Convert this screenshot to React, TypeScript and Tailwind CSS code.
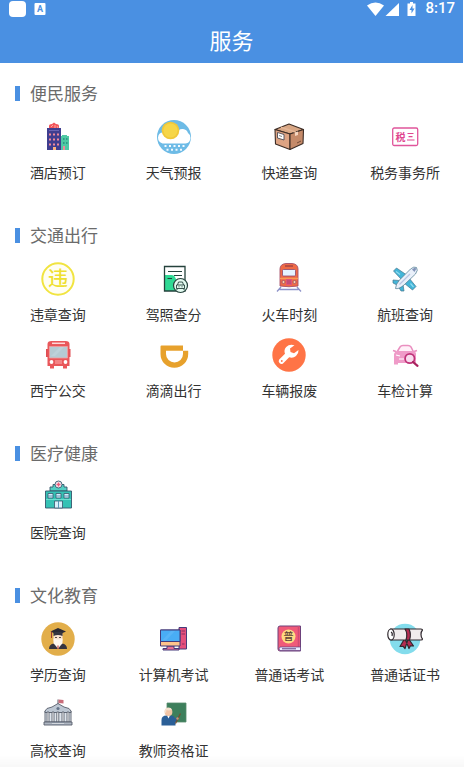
import type { ReactNode } from 'react'

type Service = { name: string; icon: ReactNode }
type Group = { title: string; items: Service[] }

function Icon({ children }: { children: ReactNode }) {
  return (
    <svg viewBox="0 0 34 34" className="size-[34px] overflow-visible" aria-hidden="true">
      {children}
    </svg>
  )
}

const HotelIcon = () => (
  <Icon>
    <path d="M8 9V6q0-2 3-2l2-1.500 2 1.500q3 0 3 2v3z" fill="#f2545b" />
    <path d="M10 7l2-2M14 5v3M16 6l1 2" stroke="#ffc0b0" strokeWidth="0.800" />
    <path d="M19.500 17v-1h1.500v-1h5v1h2v14h-8.500z" fill="#4fc9a4" />
    <path d="M6 8h14v22H6z" fill="#3f3d8f" />
    <g fill="#f08a9b">
      <path d="M8 13.500h2v2H8zM12 13.500h2v2h-2zM16 13.500h2v2h-2zM8 18.500h2v2H8zM12 18.500h2v2h-2zM16 18.500h2v2h-2zM8 23.500h2v2H8zM12 23.500h2v2h-2zM16 23.500h2v2h-2z" />
    </g>
    <path d="M8 10.500h10" stroke="#6864b4" />
    <path d="M22 18h1.500v2H22zM25 18h1.500v2H25zM22 22h1.500v2H22zM25 22h1.500v2H25z" fill="#2f9a86" />
    <path d="M12 27h3v3h-3z" fill="#ffb37c" />
    <path d="M22 26h2v4h-2z" fill="#f08a9b" />
  </Icon>
)

const WeatherIcon = () => (
  <Icon>
    <circle cx="17" cy="17" r="17" fill="#6dbbe6" />
    <path d="M5.500 23.500Q1 22 1 17.500 1.500 12.500 6 12.500q8 5 13 1Q21.500 8.500 26 9q4 .5 5 4 2.500 1.500 2.500 5-.5 5-5 5.500z" fill="#fff" />
    <circle cx="13.500" cy="10.500" r="8.800" fill="#f0c83a" />
    <circle cx="13.500" cy="10.500" r="7" fill="#f6d648" />
    <g fill="#f2faff">
      <path d="M7.500 25h2v2h-2zM12 25h2v2h-2zM16.500 25h2v2h-2zM21 25h2v2h-2zM25.500 25h2v2h-2zM9.500 28.800h2v2h-2zM14 28.800h2v2h-2zM18.500 28.800h2v2h-2zM23 28.800h2v2h-2z" />
    </g>
  </Icon>
)

const ParcelIcon = () => (
  <Icon>
    <g stroke="#3c2c25" strokeWidth="1.100" strokeLinejoin="round">
      <path d="M3 9.500L17 4l14.500 5.500L18 14z" fill="#d9a785" />
      <path d="M3 9.500L18 14v15.500L3.500 24z" fill="#dda383" />
      <path d="M18 14l13.500-4.500L31 23.500l-13 6z" fill="#c58a69" />
    </g>
    <path d="M9 7.200l15 5" stroke="#e5b797" strokeWidth="1.500" />
    <path d="M23 12.500l3-1v3.500l-3 1z" fill="#f6d6c0" />
    <path d="M5.500 12.500l6.500 2v5.500l-6.500-2z" fill="#fff" stroke="#4b4b55" strokeWidth="0.900" />
    <path d="M7 15.500l3 1" stroke="#888" />
    <path d="M25 23l4-2" stroke="#5c3a2a" strokeWidth="0.800" />
  </Icon>
)

const TaxIcon = () => (
  <Icon>
    <rect x="4.700" y="8" width="25" height="17.500" rx="1.500" fill="#fff" stroke="#e0559b" strokeWidth="1.300" />
    <text x="7.500" y="20.500" fontSize="10" fontWeight="700" fill="#e0468f" fontFamily="'Noto Sans CJK SC', sans-serif">
      税
    </text>
    <path d="M19.500 13.500h6M20.500 16.700h4M19 20h7.500" stroke="#e0468f" strokeWidth="1.200" />
  </Icon>
)

const ViolationIcon = () => (
  <Icon>
    <circle cx="17" cy="17" r="15.700" fill="#fffef2" stroke="#f1e440" strokeWidth="2" />
    <text x="17" y="24" fontSize="20" textAnchor="middle" fill="#efe02f" fontWeight="500" fontFamily="'Noto Sans CJK SC', sans-serif">
      违
    </text>
  </Icon>
)

const LicenseIcon = () => (
  <Icon>
    <path d="M7.500 4.500h20.500v24.500H7.500z" fill="#fff" />
    <path d="M7.500 13h7q3 0 4 3t4 3h5.500v10H7.500z" fill="#2fd994" />
    <path d="M7.500 4.500H28V29H7.500z" fill="none" stroke="#25423c" strokeWidth="1.300" />
    <path d="M11 9.500h14M17 13.500h8M10.500 16.500h4.500" stroke="#25423c" strokeWidth="1.200" />
    <circle cx="23.500" cy="23.500" r="7" fill="#e4fbf1" stroke="#25423c" strokeWidth="1.200" />
    <path d="M20.500 23l1-3h4l1 3M19.500 23h8v3.500h-8zM20 26.500v1.500M27 26.500v1.500M21.500 24.800h1M24.500 24.800h1" fill="none" stroke="#25423c" strokeWidth="0.900" />
  </Icon>
)

const TrainIcon = () => (
  <Icon>
    <path d="M9 25l-4 4.500M25 25l4 4.500M7.500 27.500h19" stroke="#8d93c9" strokeWidth="1.300" />
    <path d="M8 24V7q0-5 6-5.500h6q6 .5 6 5.500v17q-9 1.500-18 0z" fill="#ef6a45" stroke="#a6506a" strokeWidth="0.900" />
    <path d="M13 4h8" stroke="#a64545" strokeWidth="1.500" />
    <rect x="10.500" y="7.500" width="13" height="6.500" rx="1" fill="#e5f3ff" stroke="#8c466d" strokeWidth="0.800" />
    <path d="M8 16.500h18" stroke="#f79b55" strokeWidth="1.500" />
    <path d="M14 17h6v6h-6z" fill="#e05378" />
    <path d="M15 19h4M15 21h4" stroke="#8c466d" strokeWidth="0.700" />
    <circle cx="11.500" cy="20" r="1.500" fill="#ffd3a1" stroke="#8c466d" strokeWidth="0.700" />
    <circle cx="22.500" cy="20" r="1.500" fill="#ffd3a1" stroke="#8c466d" strokeWidth="0.700" />
  </Icon>
)

const PlaneIcon = () => (
  <Icon>
    <g stroke="#47758d" strokeWidth="0.700" strokeLinejoin="round">
      <path d="M18 12.500L8.500 6 5.500 9l8 8.500zM21 16l7 8.500-3.500 3.500-8.500-7z" fill="#43b5d8" />
      <path d="M11.500 18.500l-6.500-.5v3l5 2.500zM15 22.500l1 6.500h-3l-3-5z" fill="#43b5d8" />
      <path d="M7.500 26.500q0-4 4-8.500L22.500 7q3.500-3 6-1.500Q30.500 8 27.500 12L16 23Q10.500 27.500 7.500 26.500z" fill="#e9f0fa" />
    </g>
    <path d="M24 7.500l2.500 2.500 1.800-3.200-1.300-1q-1 0-3 1.700z" fill="#8293b8" />
    <path d="M11.500 22.500L22 12" stroke="#b9c4e2" strokeWidth="1.200" />
    <path d="M8 9.500l4 3M22.500 21.500l3 3.500" stroke="#8fdcf0" strokeWidth="1.200" />
  </Icon>
)

const BusIcon = () => (
  <Icon>
    <path d="M5 11h2v8H5zM27.500 11h2v8h-2z" fill="#df4f54" />
    <path d="M6.500 28V6q0-3 4-3h14q4 0 4 3v22h-2.500v2.500H22V28h-9v2.500H9V28z" fill="#e9575a" />
    <path d="M11 5.300h13" stroke="#ffd8d8" strokeWidth="1.500" />
    <path d="M8.500 8.500h18V20h-18z" fill="#b5cbd3" stroke="#f3a0a0" strokeWidth="0.800" />
    <path d="M10 18l9-9h4l-9 9z" fill="#bdd2da" />
    <circle cx="10.500" cy="24" r="1.900" fill="#fff" />
    <circle cx="24.500" cy="24" r="1.900" fill="#fff" />
    <path d="M14 23h7M14 25h7" stroke="#fbb" strokeWidth="0.900" />
  </Icon>
)

const DidiIcon = () => (
  <Icon>
    <path d="M3.500 8.500q0-1 1-1H26v5.300h5.200V16a13.800 13.800 0 0 1-27.700 0z" fill="#e7a12c" />
    <path d="M9 12.800h17V16a8.500 8.500 0 0 1-17 0z" fill="#fff" />
  </Icon>
)

const WrenchIcon = () => (
  <Icon>
    <circle cx="17" cy="17" r="16.700" fill="#ff7446" />
    <path
      d="M26.500 12l-4.500 3.300-3.500-1.300-.5-3.500 4.500-3.300q-5-1.700-8.300 1.800-2.700 3-1.200 6.700l-5.800 5.800q-1.300 1.700.3 3.500t3.500.5l6.200-6.200q3.800 1.300 6.800-1.300 2.800-2.500 2.500-6z"
      fill="#fff"
    />
    <circle cx="9.800" cy="23" r="0.900" fill="#ff7446" />
  </Icon>
)

const InspectIcon = () => (
  <Icon>
    <path d="M9 14l3-5q1-1.500 3-1.500h5q2 0 3 1.500l2.500 5z" fill="#fff0f8" stroke="#ea8fc0" strokeWidth="1.500" />
    <path d="M5 12.500l3 1M29 12.500l-3 1" stroke="#ea8fc0" strokeWidth="1.800" />
    <path d="M6 16q1-3 4-3h14q4 0 4 3v9H10v1.500H6z" fill="#ef9bc8" />
    <path d="M8 17l4 1M11 21h5" stroke="#fff" strokeWidth="1.200" />
    <circle cx="21.800" cy="20.500" r="4.700" fill="#f8dcee" stroke="#bf3278" strokeWidth="1.700" />
    <path d="M25 24l4.500 3.800" stroke="#a9235e" strokeWidth="2.200" strokeLinecap="round" />
  </Icon>
)

const HospitalIcon = () => (
  <Icon>
    <g stroke="#37566c" strokeWidth="0.900">
      <path d="M9 11V7h3V4.500h11V7h3v4z" fill="#54cfc4" />
      <path d="M4.500 11h26v17h-26z" fill="#35c2b5" />
      <circle cx="17.500" cy="4.500" r="3.500" fill="#f4edf5" />
    </g>
    <path d="M17.500 2.500v4M15.500 4.500h4" stroke="#ed5a78" strokeWidth="1.400" />
    <g fill="#d7f0fb" stroke="#37566c" strokeWidth="0.800">
      <path d="M7 13.500h5V18H7zM15 13.500h5V18h-5zM23 13.500h5V18h-5zM13.500 21h8v7h-8z" />
    </g>
    <path d="M7 16h5M15 16h5M23 16h5M17.500 21v7" stroke="#4a8fb0" strokeWidth="0.900" />
    <path d="M5 19.500h25" stroke="#7ce4d8" strokeWidth="0.800" />
  </Icon>
)

const GraduateIcon = () => (
  <Icon>
    <circle cx="17" cy="17" r="16.700" fill="#e2ae4a" />
    <path d="M8 27q0-5 5-5.500h8q5 .5 5 5.500z" fill="#36343f" />
    <path d="M13 21.500h8L17 27z" fill="#f5f0ee" />
    <path d="M12.500 12h9v5q0 5-4.500 5.500-4.500-.5-4.500-5.500z" fill="#fae3d1" />
    <path d="M12.500 16.500q4.500 2 9 0v5l-4.500 3.500-4.500-3.500z" fill="#fff8f0" />
    <path d="M17 23.500V27" stroke="#c64b42" strokeWidth="1.200" />
    <path d="M9.500 9.500L17 6l8 3.500-8 3.500z" fill="#292933" />
    <path d="M12.500 10.500q4.500-1.500 9 0V14q-4.500-2-9 0z" fill="#353541" />
    <path d="M10.500 9.500V16" stroke="#9e3a32" strokeWidth="1" />
    <path d="M14 15.500h2M18 15.500h2" stroke="#443a39" strokeWidth="0.900" />
  </Icon>
)

const ComputerIcon = () => (
  <Icon>
    <g stroke="#453b7b" strokeWidth="1">
      <path d="M22 5.500h7.500V27H22z" fill="#e54f7c" />
      <path d="M10 24h7v2.500h5V28H6v-1.500h4z" fill="#e86f93" />
      <path d="M3.500 8H23v16H3.500z" fill="#ffc48b" />
      <path d="M3.500 8H23v11.500H3.500z" fill="#49adf5" />
    </g>
    <path d="M24.500 9h3.500M24.500 12h3.500M25 22h2.500" stroke="#8b2e60" strokeWidth="1" />
    <path d="M5 18.500L14 9h4L9 18.500z" fill="#58b4f7" />
  </Icon>
)

const MandarinBookIcon = () => (
  <Icon>
    <path d="M6 6q0-2 2-2h20.500v25H8q-2 0-2-2z" fill="#f05a79" stroke="#6c417b" strokeWidth="1" />
    <path d="M26.500 4v21" stroke="#d04a74" strokeWidth="1.500" />
    <path d="M8 25h20.500v3.500H8q-2-1.500 0-3.500z" fill="#eceaff" stroke="#5d3c80" strokeWidth="0.700" />
    <path d="M10 26.800h14" stroke="#5d3c80" strokeWidth="1" />
    <circle cx="16.500" cy="14.500" r="7" fill="#ffdc83" />
    <text x="16.500" y="18" fontSize="10" textAnchor="middle" fontWeight="500" fill="#5b3f35" fontFamily="'Noto Sans CJK SC', sans-serif">
      普
    </text>
  </Icon>
)

const DiplomaIcon = () => (
  <Icon>
    <circle cx="17" cy="17" r="15.300" fill="#83dcec" />
    <g stroke="#30292f" strokeWidth="1.200" strokeLinejoin="round">
      <path d="M17 16l-5 8.500 3.200-.2 1.800 2.200 3-9zM20 16l5.500 8-3.200-.1-1.300 2.600-3.500-8.500z" fill="#b62d52" />
      <path d="M2.500 7H33q1.500 0 1.500 1-1.500 1.500-1.500 4.500t1.500 4.500q0 1-1.500 1H3z" fill="#f0ebec" />
      <ellipse cx="3" cy="12.500" rx="3.200" ry="5.500" fill="#fff" />
      <path d="M3 10q2 1 1 4" fill="none" />
      <path d="M17 7q3 4.500 1 11h3.500Q23.500 12.500 21 7z" fill="#b62d52" />
    </g>
  </Icon>
)

const UniversityIcon = () => (
  <Icon>
    <path d="M17 8V1.500" stroke="#575d6b" strokeWidth="1" />
    <path d="M17.500 1.500l5 .5v3.500l-5-.5z" fill="#c96d7a" />
    <g stroke="#575d6b" strokeWidth="0.900" strokeLinejoin="round">
      <path d="M4 13h26v11H4z" fill="#dfe5ed" />
      <path d="M4 13l2-2.500 5-1.500 6-3.500L23 9l5 1.500 2 2.500v1.500H4z" fill="#bdc7d3" />
      <path d="M6 14h2v10H6zM11 14h2v10h-2zM15.800 14h2v10h-2zM21 14h2v10h-2zM26 14h2v10h-2z" fill="#fff" />
      <path d="M3 24h28v3H3z" fill="#aeb6c2" />
    </g>
    <circle cx="17" cy="10.500" r="1.600" fill="#65758b" />
    <path d="M11 24h12v3H11z" fill="#818b9a" />
    <path d="M11 25.500h12" stroke="#e8ebef" strokeWidth="0.800" />
  </Icon>
)

const TeacherIcon = () => (
  <Icon>
    <path d="M10 5h19v19H10z" fill="#3d7f5c" stroke="#568b6c" strokeWidth="0.800" />
    <path d="M4.500 27.500V22q0-4.500 5-4.500h4q4 0 4.500 3l3-2 1 1.500-3.500 4v3.500z" fill="#2b5f97" />
    <path d="M10 17.500l1.500 3 1.500-3z" fill="#fff" />
    <circle cx="11.500" cy="14" r="3.900" fill="#f2c5a6" />
    <path d="M7.500 14q0-4.500 4-4.500 2.500 0 3.500 2-3 1.500-5.500.5l-.5 3z" fill="#f4e1cf" />
    <path d="M18.500 25.500l5-10" stroke="#754c32" strokeWidth="1.200" />
    <circle cx="20.500" cy="20.500" r="1.200" fill="#c9956f" />
  </Icon>
)

const groups: Group[] = [
  {
    title: '便民服务',
    items: [
      { name: '酒店预订', icon: <HotelIcon /> },
      { name: '天气预报', icon: <WeatherIcon /> },
      { name: '快递查询', icon: <ParcelIcon /> },
      { name: '税务事务所', icon: <TaxIcon /> },
    ],
  },
  {
    title: '交通出行',
    items: [
      { name: '违章查询', icon: <ViolationIcon /> },
      { name: '驾照查分', icon: <LicenseIcon /> },
      { name: '火车时刻', icon: <TrainIcon /> },
      { name: '航班查询', icon: <PlaneIcon /> },
      { name: '西宁公交', icon: <BusIcon /> },
      { name: '滴滴出行', icon: <DidiIcon /> },
      { name: '车辆报废', icon: <WrenchIcon /> },
      { name: '车检计算', icon: <InspectIcon /> },
    ],
  },
  {
    title: '医疗健康',
    items: [{ name: '医院查询', icon: <HospitalIcon /> }],
  },
  {
    title: '文化教育',
    items: [
      { name: '学历查询', icon: <GraduateIcon /> },
      { name: '计算机考试', icon: <ComputerIcon /> },
      { name: '普通话考试', icon: <MandarinBookIcon /> },
      { name: '普通话证书', icon: <DiplomaIcon /> },
      { name: '高校查询', icon: <UniversityIcon /> },
      { name: '教师资格证', icon: <TeacherIcon /> },
    ],
  },
]

function StatusBar() {
  return (
    <div className="flex h-[17px] items-center justify-between pr-2 pl-[9px]">
      <div className="flex items-center gap-2">
        <span className="h-4 w-[17px] rounded bg-white" />
        <svg viewBox="0 0 12 12" className="size-3" aria-hidden="true">
          <rect x="0.500" width="11" height="12" rx="1" fill="#fff" />
          <text x="6" y="9" fontSize="9" fontWeight="700" textAnchor="middle" fill="#4a90e2" fontFamily="Roboto, sans-serif">
            A
          </text>
        </svg>
      </div>
      <div className="flex items-center gap-1">
        <svg viewBox="0 0 50 14" className="h-3.5 w-[50px]" aria-hidden="true" fill="#fff">
          <path d="M0 3.500q8.500-6 17 0L8.500 14z" />
          <path d="M32 1v13H18.500z" />
          <path d="M40.500 1.500h2.500V0h3v1.500h2.500V14h-8z" />
          <path d="M45.500 3l-3 5h2v3.500l3-5h-2z" fill="#4a90e2" />
        </svg>
        <span className="pl-1 font-[Roboto,sans-serif] text-[15px] leading-[17px] font-medium">8:17</span>
      </div>
    </div>
  )
}

export default function App() {
  return (
    <div className="min-h-screen bg-white pr-px font-['Noto_Sans_CJK_SC',sans-serif]">
      <header className="bg-[#4a90e2] pb-2 text-white">
        <StatusBar />
        <h1 className="pt-1.5 text-center text-[22px] leading-8">服务</h1>
      </header>

      <main className="flex flex-col gap-[42px] pt-[19px]">
        {groups.map(group => (
          <section key={group.title}>
            <div className="mb-4 flex items-center gap-2.5 pl-[15px]">
              <span className="h-[15px] w-[5px] bg-[#4a90e2]" />
              <h2 className="text-[17px] leading-[22px] text-[#6b6b6b]">{group.title}</h2>
            </div>
            <div className="grid grid-cols-4 gap-y-3.5">
              {group.items.map(item => (
                <a key={item.name} href="#" className="flex flex-col items-center gap-2">
                  {item.icon}
                  <span className="text-sm leading-5 whitespace-nowrap text-[#333]">{item.name}</span>
                </a>
              ))}
            </div>
          </section>
        ))}
      </main>

      {/* soft shade above the bottom edge */}
      <div className="pointer-events-none fixed inset-x-0 bottom-0 h-3 bg-linear-to-t from-black/[0.03] to-transparent" />
    </div>
  )
}
